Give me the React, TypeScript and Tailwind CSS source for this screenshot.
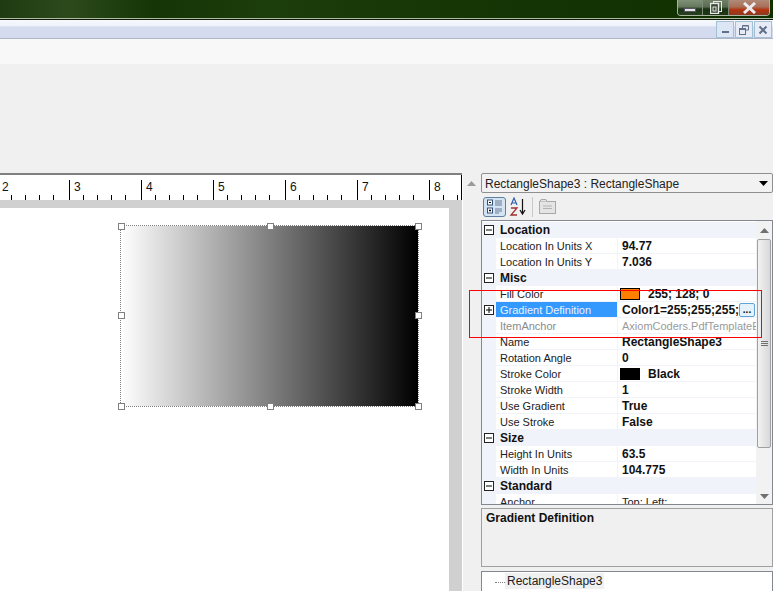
const font = { fontFamily: '"Liberation Sans", Arial, sans-serif' };

type Row =
  | { kind: "cat"; label: string }
  | { kind: "prop"; label: string; value: string; swatch?: string; selected?: boolean; muted?: boolean; plain?: boolean };

const rows: Row[] = [
  { kind: "cat", label: "Location" },
  { kind: "prop", label: "Location In Units X", value: "94.77" },
  { kind: "prop", label: "Location In Units Y", value: "7.036" },
  { kind: "cat", label: "Misc" },
  { kind: "prop", label: "Fill Color", value: "255; 128; 0", swatch: "bg-[#ff8000]" },
  { kind: "prop", label: "Gradient Definition", value: "Color1=255;255;255;", selected: true },
  { kind: "prop", label: "ItemAnchor", value: "AxiomCoders.PdfTemplateEditor", muted: true },
  { kind: "prop", label: "Name", value: "RectangleShape3" },
  { kind: "prop", label: "Rotation Angle", value: "0" },
  { kind: "prop", label: "Stroke Color", value: "Black", swatch: "bg-black" },
  { kind: "prop", label: "Stroke Width", value: "1" },
  { kind: "prop", label: "Use Gradient", value: "True" },
  { kind: "prop", label: "Use Stroke", value: "False" },
  { kind: "cat", label: "Size" },
  { kind: "prop", label: "Height In Units", value: "63.5" },
  { kind: "prop", label: "Width In Units", value: "104.775" },
  { kind: "cat", label: "Standard" },
  { kind: "prop", label: "Anchor", value: "Top; Left;", plain: true },
];

const ExpandBox = ({ plus }: { plus?: boolean }) => (
  <svg width="10" height="10" viewBox="0 0 10 10" className="block">
    <rect x="0.5" y="0.5" width="9" height="9" fill="#fff" stroke="#222" />
    <path d={plus ? "M2 5h6M5 2v6" : "M2 5h6"} stroke="#000" />
  </svg>
);

const Arrow = ({ up, color = "#606060" }: { up?: boolean; color?: string }) => (
  <svg width="9" height="5" viewBox="0 0 9 5" className="block">
    <path d={up ? "M4.5 0L9 5H0z" : "M0 0h9L4.5 5z"} fill={color} />
  </svg>
);

const Handle = ({ className }: { className: string }) => (
  <div className={`absolute w-[7px] h-[7px] border border-[#808080] bg-white ${className}`} />
);

const RulerSegment = ({ n, first }: { n: number; first?: boolean }) => (
  <div className={`w-[72px] shrink-0 h-[20px] mt-[5px] border-l border-black flex flex-col justify-between ${first ? "ml-[-3px]" : ""}`}>
    <span className="pl-[4px] text-[12px] leading-[14px] text-[#111]">{n}</span>
    <div className="flex h-[5px] pl-[13px] gap-[13px]">
      <div className="w-px bg-black" />
      <div className="w-px bg-black" />
      <div className="w-px bg-black" />
      <div className="w-px bg-black" />
    </div>
  </div>
);

const GridRow = ({ row }: { row: Row }) => {
  if (row.kind === "cat") {
    return (
      <div className="flex h-[16px] bg-[#f0f3fa] items-center">
        <div className="w-[14px] pl-[2px] shrink-0">
          <ExpandBox />
        </div>
        <span className="pl-[4px] font-bold text-[12px] leading-[16px] text-[#111]">{row.label}</span>
      </div>
    );
  }
  return (
    <div className="flex h-[16px]">
      <div className="w-[14px] pl-[2px] shrink-0 bg-[#f0f3fa] flex items-center">{row.selected && <ExpandBox plus />}</div>
      <div
        className={`w-[122px] shrink-0 pl-[4px] text-[11px] leading-[17px] border-r border-b border-[#f0f3fa] whitespace-nowrap overflow-hidden ${
          row.selected ? "bg-[#3399ff] text-[#e8f2ff]" : row.muted ? "text-[#8a8a8a]" : "text-[#222]"
        }`}
      >
        {row.label}
      </div>
      <div className="flex-1 min-w-0 relative flex items-center pl-[2px] h-[16px] border-b border-[#f0f3fa] overflow-hidden whitespace-nowrap">
        {row.swatch && <div className={`w-[20px] h-[12px] border border-black shrink-0 mr-[8px] ${row.swatch}`} />}
        <span
          className={`${row.swatch ? "" : "pl-[2px]"} self-start leading-[17px] ${
            row.muted ? "text-[11px] text-[#9a9a9a]" : row.plain ? "text-[11px] text-[#222]" : "font-bold text-[12px] text-[#111]"
          }`}
        >
          {row.value}
        </span>
        {row.selected && (
          <div className="absolute right-[1px] top-[1px] w-[16px] h-[14px] rounded-[2px] border border-[#5fa4d6] bg-[#e6f2fb] text-[10px] font-bold leading-[11px] text-center text-[#111]">
            ...
          </div>
        )}
      </div>
    </div>
  );
};

export default function App() {
  return (
    <div style={font} className="w-[773px] h-[591px] overflow-hidden bg-[#f0f0f0] flex flex-col">
      {/* desktop strip with the glass window buttons */}
      <div className="h-[18px] shrink-0 flex justify-end pr-[3px] bg-[linear-gradient(90deg,#1f3b12_0%,#2c4a1c_9%,#153506_20%,#1c3d0c_35%,#183808_50%,#143304_75%,#103000_100%)]">
        <div className="flex h-[16px] w-[93px] rounded-b-[4px] border border-t-0 border-[#a8b4a0] overflow-hidden">
          <div className="w-[25px] flex justify-center items-center border-r border-[#7d8a76] bg-[linear-gradient(180deg,#7f9077_0%,#66785c_45%,#1d3518_60%,#26401f_100%)]">
            <div className="w-[12px] h-[4px] mt-[4px] bg-[#e8e8e8] border border-[#556]" />
          </div>
          <div className="w-[26px] flex justify-center items-center border-r border-[#7d8a76] bg-[linear-gradient(180deg,#6f8067_0%,#5a6c50_45%,#1a3215_60%,#1e3818_100%)]">
            <svg width="12" height="13" viewBox="0 0 12 13">
              <rect x="3.5" y="0.5" width="8" height="10" fill="none" stroke="#e8e8e8" />
              <rect x="0.5" y="2.5" width="8" height="10" fill="#34482c" stroke="#e8e8e8" strokeWidth="1.4" />
              <rect x="3" y="6" width="3" height="4" fill="none" stroke="#e8e8e8" />
            </svg>
          </div>
          <div className="flex-1 flex justify-center items-center bg-[linear-gradient(180deg,#b08a78_0%,#a96f58_45%,#b33410_65%,#8c3a20_100%)]">
            <svg width="15" height="12" viewBox="0 0 15 12">
              <path d="M2 1l11 10M13 1L2 11" stroke="#ecebf0" strokeWidth="3" />
            </svg>
          </div>
        </div>
      </div>
      <div className="h-px shrink-0 bg-[#aebba2]" />
      <div className="h-px shrink-0 bg-[#101808]" />

      {/* MDI child title bar */}
      <div className="h-[19px] shrink-0 flex justify-end items-end gap-px pr-px border-b border-[#b0b4c8] bg-[linear-gradient(180deg,#f6f8fc_0%,#eef2fa_33%,#d6dcf0_38%,#d5dbef_100%)]">
        <div className="w-[18px] h-[17px] flex justify-center items-end pb-[4px] border border-[#a4c0d4] bg-[#dde6f4]">
          <div className="w-[7px] h-[2px] bg-[#60708a]" />
        </div>
        <div className="w-[18px] h-[17px] flex justify-center items-center border border-[#a4c0d4] bg-[#e6ebf6]">
          <svg width="10" height="12" viewBox="0 0 10 12">
            <path d="M3.5 4V1.5H9.5V6H7" fill="none" stroke="#60708a" />
            <rect x="0.5" y="4.5" width="6" height="6" fill="none" stroke="#60708a" />
            <path d="M1 5.5h5M4 2h5" stroke="#60708a" />
          </svg>
        </div>
        <div className="w-[18px] h-[17px] flex justify-center items-center border border-[#a4c0d4] bg-[#e6ebf6]">
          <svg width="10" height="10" viewBox="0 0 10 10">
            <path d="M1.5 1.5l7 7M8.5 1.5l-7 7" stroke="#60708a" strokeWidth="2" />
          </svg>
        </div>
      </div>

      <div className="h-[25px] shrink-0 bg-[#f8f8f8]" />
      <div className="h-[109px] shrink-0 bg-[#f0f0f0]" />

      <div className="flex-1 min-h-0 flex">
        {/* designer surface */}
        <div className="w-[462px] shrink-0 flex flex-col border-t-2 border-[#808080]">
          <div className="h-[25px] shrink-0 bg-white border-r border-black flex overflow-hidden text-[#111]">
            {[2, 3, 4, 5, 6, 7, 8].map((n) => (
              <RulerSegment key={n} n={n} first={n === 2} />
            ))}
          </div>
          <div className="h-[8px] shrink-0 bg-[#d0d0d0]" />
          <div className="flex-1 flex bg-[#d0d0d0]">
            <div className="w-[449px] bg-white pt-[17px] pl-[120px]">
              <div className="relative w-[299px] h-[182px] border border-dotted border-[#808080] bg-clip-padding bg-[linear-gradient(90deg,#ffffff_0%,#000000_100%)]">
                <Handle className="-left-[3px] -top-[3px]" />
                <Handle className="left-[146px] -top-[3px]" />
                <Handle className="-right-[4px] -top-[3px]" />
                <Handle className="-left-[3px] top-[86px]" />
                <Handle className="-right-[4px] top-[86px]" />
                <Handle className="-left-[3px] -bottom-[4px]" />
                <Handle className="left-[146px] -bottom-[4px]" />
                <Handle className="-right-[4px] -bottom-[4px]" />
              </div>
            </div>
          </div>
        </div>

        <div className="w-[18px] shrink-0 mt-[2px] bg-[#f0f0f0] border-l border-white flex justify-center pt-[6px]">
          <Arrow up color="#9a9a9a" />
        </div>

        {/* properties panel */}
        <div className="relative flex-1 min-w-0 pl-px flex flex-col bg-[#f0f0f0]">
          <div className="h-[20px] shrink-0 rounded-[2px] border border-[#8e8f8f] bg-[#f2f2f2] flex items-center justify-between pl-[3px] pr-[4px] text-[12px] text-[#222]">
            <span className="pt-px">RectangleShape3 : RectangleShape</span>
            <Arrow color="#000" />
          </div>

          <div className="h-[27px] shrink-0 flex items-center pl-[2px]">
            <div className="w-[23px] h-[20px] rounded-[3px] border border-[#5f7f9f] bg-[#d5e4f2] flex items-center justify-center">
              <svg width="16" height="16" viewBox="0 0 16 16">
                <rect x="0.5" y="1" width="5" height="5" fill="#fff" stroke="#30507a" />
                <rect x="0.5" y="9" width="5" height="5" fill="#fff" stroke="#30507a" />
                <path d="M2 3.5h2M2 11.5h2M3 10.5v2" stroke="#000" />
                <path d="M8 2h7M8 4h7M8 6h7M8 10h7M8 12h7M8 14h4" stroke="#6a7a90" />
              </svg>
            </div>
            <div className="w-[18px] h-[20px] ml-[3px] flex items-center justify-center">
              <svg width="18" height="19" viewBox="0 0 18 19">
                <path d="M2 8l3-7 3 7M3.2 6h3.6" fill="none" stroke="#3060b0" strokeWidth="1.2" />
                <path d="M2 11h6L2 18h6" fill="none" stroke="#a03030" strokeWidth="1.3" />
                <path d="M13.5 2v14M11 13l2.5 4 2.5-4" fill="none" stroke="#111" strokeWidth="1.2" />
              </svg>
            </div>
            <div className="w-px h-[20px] bg-[#c8c8c8] ml-[5px]" />
            <div className="ml-[6px]">
              <svg width="17" height="15" viewBox="0 0 17 15">
                <rect x="0.5" y="2.5" width="16" height="12" fill="#e4e4e4" stroke="#a8a8a8" />
                <path d="M1 2.5l1-2h5l1 2" fill="#e4e4e4" stroke="#a8a8a8" />
                <path d="M4 7h9M4 9.5h9" stroke="#b4b4b4" />
              </svg>
            </div>
          </div>

          <div className="h-[285px] shrink-0 border border-[#828790] bg-white flex overflow-hidden">
            <div className="flex-1 min-w-0 pt-px">
              {rows.map((row) => (
                <GridRow key={row.label} row={row} />
              ))}
            </div>
            <div className="w-[16px] shrink-0 bg-[#f2f2f2] flex flex-col">
              <div className="h-[18px] shrink-0 flex items-center justify-center">
                <Arrow up color="#707070" />
              </div>
              <div className="h-[209px] shrink-0 mx-px rounded-[2px] border border-[#a0a0a0] bg-[linear-gradient(90deg,#f2f2f2,#d8d8d8)] flex flex-col gap-px items-center justify-center">
                <div className="w-[7px] h-px bg-[#707070]" />
                <div className="w-[7px] h-px bg-[#707070]" />
                <div className="w-[7px] h-px bg-[#707070]" />
              </div>
              <div className="flex-1" />
              <div className="h-[16px] shrink-0 flex items-center justify-center">
                <Arrow color="#707070" />
              </div>
            </div>
          </div>

          <div className="h-[59px] shrink-0 mt-[3px] border border-[#a0a0a0] bg-[#f0f0f0] pl-[4px] pt-[2px] font-bold text-[12px] leading-[14px] text-[#111]">
            Gradient Definition
          </div>

          <div className="flex-1 mt-[4px] border border-b-0 border-[#828790] bg-white pt-px flex items-start self-stretch">
            <div className="ml-[13px] mt-[9px] w-[10px] border-t border-dotted border-[#808080]" />
            <span className="px-[2px] h-[16px] bg-[#f0f0f0] text-[12px] leading-[16px] text-[#222]">RectangleShape3</span>
          </div>

          {/* red annotation drawn over the grid */}
          <div className="absolute left-[-11px] top-[117px] w-[293px] h-[48px] border border-[#ff0000]" />
        </div>
      </div>
    </div>
  );
}
